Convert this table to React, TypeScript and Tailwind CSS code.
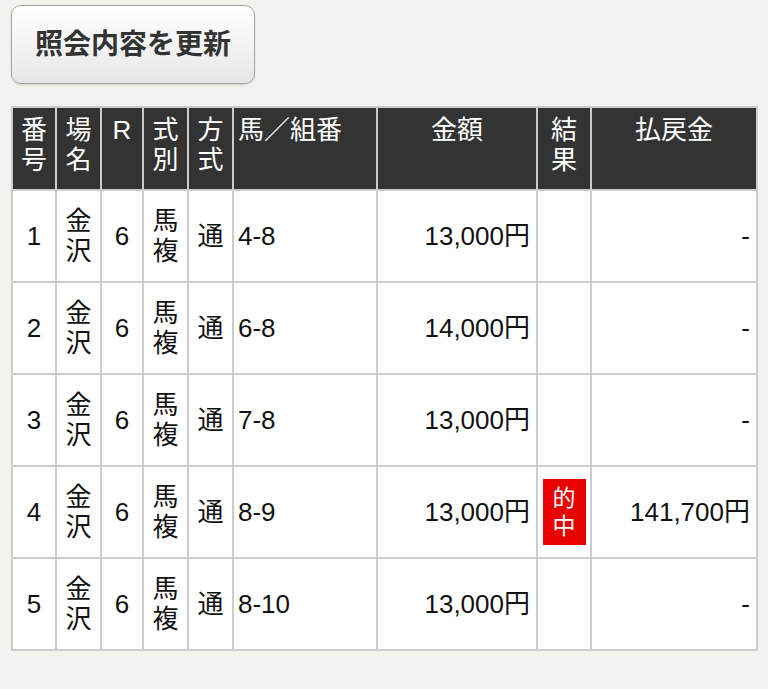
import React from 'react';

type Bet = {
  no: number;
  place: string;
  race: number;
  kind: string;
  method: string;
  combo: string;
  amount: string;
  hit: boolean;
  payout: string;
};

const bets: Bet[] = [
  { no: 1, place: '金沢', race: 6, kind: '馬複', method: '通', combo: '4-8', amount: '13,000円', hit: false, payout: '-' },
  { no: 2, place: '金沢', race: 6, kind: '馬複', method: '通', combo: '6-8', amount: '14,000円', hit: false, payout: '-' },
  { no: 3, place: '金沢', race: 6, kind: '馬複', method: '通', combo: '7-8', amount: '13,000円', hit: false, payout: '-' },
  { no: 4, place: '金沢', race: 6, kind: '馬複', method: '通', combo: '8-9', amount: '13,000円', hit: true, payout: '141,700円' },
  { no: 5, place: '金沢', race: 6, kind: '馬複', method: '通', combo: '8-10', amount: '13,000円', hit: false, payout: '-' },
];

const TwoLine = ({ text }: { text: string }) => (
  <>
    {text[0]}
    <br />
    {text[1]}
  </>
);

export default function App() {
  return (
    <div
      className="min-h-[689px] bg-[#f2f2ee] pt-[5px] pl-[11px] text-[#111]"
      style={{ fontFamily: '"Liberation Sans", "Noto Sans CJK JP", sans-serif' }}
    >
      <button className="w-[244px] h-[79px] rounded-[10px] border border-[#a8a8a8] bg-gradient-to-b from-white via-[#f4f4f4] to-[#e6e6e6] shadow-[0_1px_2px_rgba(0,0,0,0.15)] text-[28px] font-bold text-[#333]">
        照会内容を更新
      </button>

      <table className="mt-[22px] table-fixed border-collapse border-2 border-[#cccccc] text-[26px] leading-[30px]">
        <colgroup>
          <col className="w-[44px]" />
          <col className="w-[45px]" />
          <col className="w-[42px]" />
          <col className="w-[45px]" />
          <col className="w-[45px]" />
          <col className="w-[144px]" />
          <col className="w-[160px]" />
          <col className="w-[54px]" />
          <col className="w-[166px]" />
        </colgroup>
        <thead>
          <tr className="h-[83px] bg-[#333333] text-white">
            <th className="border-2 border-[#cccccc] align-top pt-[7px] font-normal text-center"><TwoLine text="番号" /></th>
            <th className="border-2 border-[#cccccc] align-top pt-[7px] font-normal text-center"><TwoLine text="場名" /></th>
            <th className="border-2 border-[#cccccc] align-top pt-[7px] font-normal text-center">R</th>
            <th className="border-2 border-[#cccccc] align-top pt-[7px] font-normal text-center"><TwoLine text="式別" /></th>
            <th className="border-2 border-[#cccccc] align-top pt-[7px] font-normal text-center"><TwoLine text="方式" /></th>
            <th className="border-2 border-[#cccccc] align-top pt-[7px] pl-[4px] font-normal text-left">馬／組番</th>
            <th className="border-2 border-[#cccccc] align-top pt-[7px] font-normal text-center">金額</th>
            <th className="border-2 border-[#cccccc] align-top pt-[7px] font-normal text-center"><TwoLine text="結果" /></th>
            <th className="border-2 border-[#cccccc] align-top pt-[7px] font-normal text-center">払戻金</th>
          </tr>
        </thead>
        <tbody className="bg-white">
          {bets.map((b) => (
            <tr key={b.no} className="h-[92px]">
              <td className="border-2 border-[#cccccc] text-center">{b.no}</td>
              <td className="border-2 border-[#cccccc] text-center"><TwoLine text={b.place} /></td>
              <td className="border-2 border-[#cccccc] text-center">{b.race}</td>
              <td className="border-2 border-[#cccccc] text-center"><TwoLine text={b.kind} /></td>
              <td className="border-2 border-[#cccccc] text-center">{b.method}</td>
              <td className="border-2 border-[#cccccc] pl-[4px] text-left">{b.combo}</td>
              <td className="border-2 border-[#cccccc] pr-[6px] text-right">{b.amount}</td>
              <td className="border-2 border-[#cccccc] text-center">
                {b.hit && (
                  <div className="mx-auto w-[43px] h-[66px] bg-[#e80000] text-white text-[23px] leading-[28px] flex flex-col items-center justify-center">
                    <span>的</span>
                    <span>中</span>
                  </div>
                )}
              </td>
              <td className="border-2 border-[#cccccc] pr-[6px] text-right">{b.payout}</td>
            </tr>
          ))}
        </tbody>
      </table>
    </div>
  );
}
